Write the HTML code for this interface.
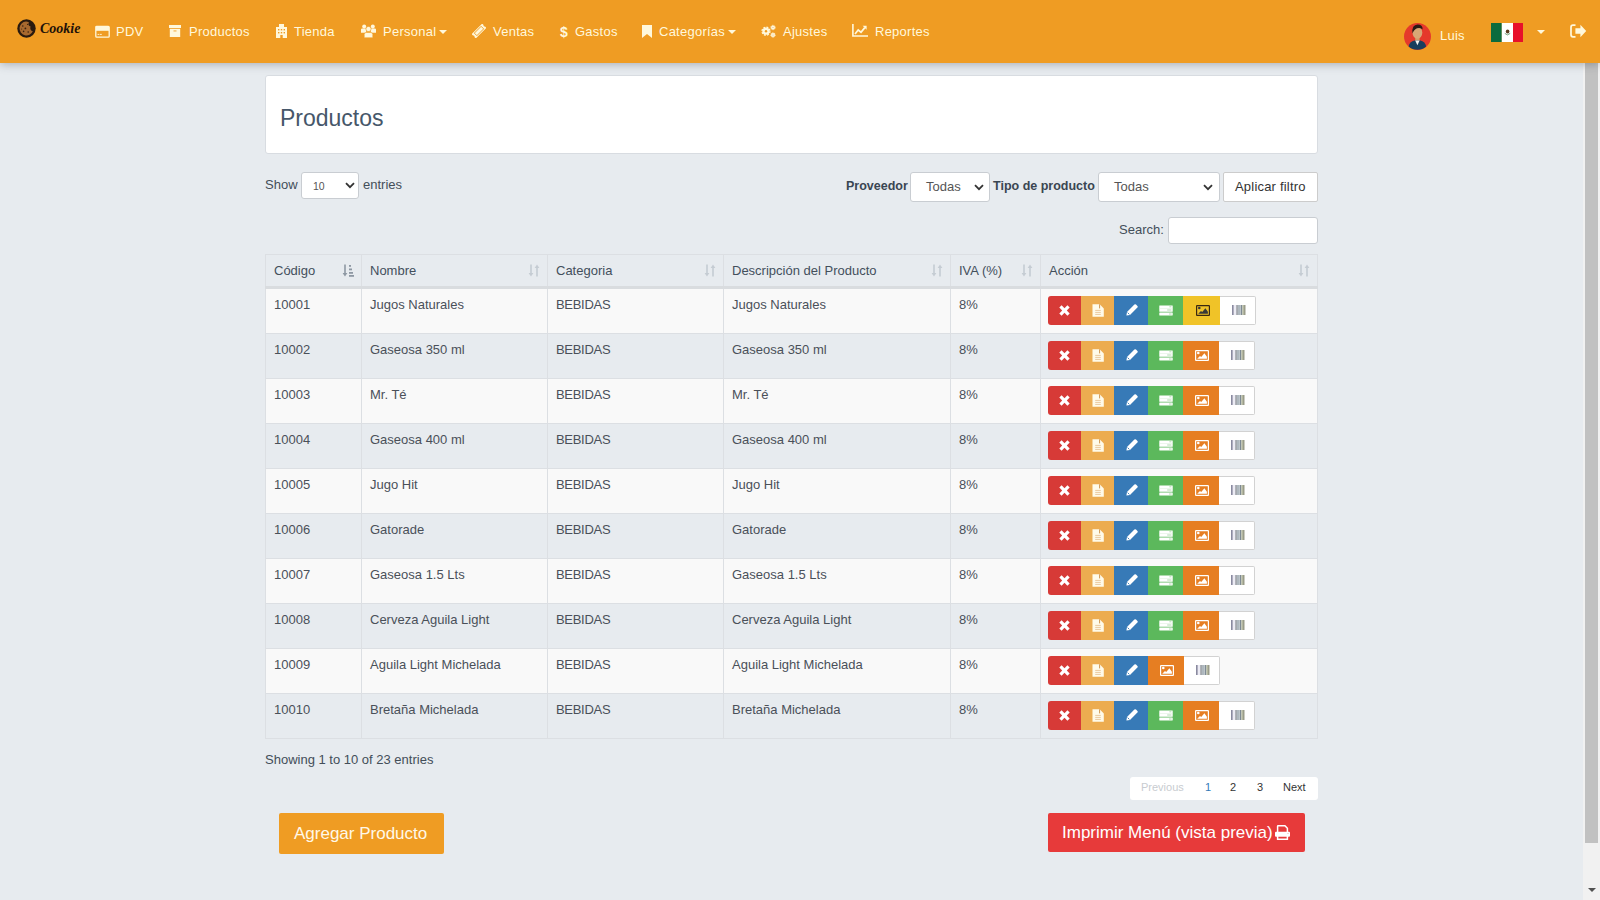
<!DOCTYPE html>
<html><head><meta charset="utf-8">
<style>
*{box-sizing:border-box;}
html,body{margin:0;padding:0;width:1600px;height:900px;overflow:hidden;}
body{background:#e7ebef;font-family:"Liberation Sans",sans-serif;color:#3d4853;font-size:13px;position:relative;}
.nav{position:absolute;left:0;top:0;width:1600px;height:63px;background:#ef9c23;z-index:10;box-shadow:0 1px 9px rgba(40,50,60,.35);}
.nav .t{position:absolute;top:24px;font-size:13px;line-height:16px;color:#fff8dc;white-space:nowrap;letter-spacing:.25px;}
.nav svg{position:absolute;}
.caret{position:absolute;width:0;height:0;border-left:4px solid transparent;border-right:4px solid transparent;border-top:4.5px solid #fff8dc;}
.sb{position:absolute;left:1583px;top:63px;width:17px;height:837px;background:#f1f1f1;z-index:5;}
.sb .th{position:absolute;left:2px;top:0;width:13px;height:780px;background:#c1c1c1;}
.sb .ar{position:absolute;left:4.5px;top:825px;width:0;height:0;border-left:4px solid transparent;border-right:4px solid transparent;border-top:4px solid #505050;}
.panel{position:absolute;left:265px;top:75px;width:1053px;height:79px;background:#fff;border:1px solid #d8dce1;border-radius:3px;}
.panel h1{position:absolute;left:14px;top:29px;margin:0;font-weight:normal;font-size:23px;line-height:26px;color:#46576a;}
.lbl{position:absolute;font-size:13px;line-height:16px;color:#434e59;white-space:nowrap;}
.sel{position:absolute;background:#fff;border:1px solid #c9cdd2;border-radius:3px;}
.sel .v{position:absolute;font-size:13px;line-height:16px;color:#4a4a4a;white-space:nowrap;}
.sel svg{position:absolute;}
.btnw{position:absolute;background:#fff;border:1px solid #ccc;border-radius:2px;}
table.dt{position:absolute;left:265px;top:254px;width:1052px;border-collapse:collapse;table-layout:fixed;}
table.dt th,table.dt td{border:1px solid #dcdfe3;padding:0 8px;text-align:left;vertical-align:top;white-space:nowrap;}
table.dt th{height:33px;font-weight:normal;font-size:13px;color:#434f5c;background:#e7ebef;border-bottom:3px solid #d9dcdf;position:relative;padding-top:8px;line-height:16px;}
table.dt td{height:45px;font-size:13px;line-height:16px;color:#4a5059;padding-top:8px;}
tbody tr:first-child td{height:46px;}
tr.odd td{background:#f9f9f9;}
tr.even td{background:#e7ebef;}
.si{position:absolute;right:7px;top:9px;}
.grp{display:flex;margin-top:-1px;margin-left:-1px;}
.b{display:flex;align-items:center;justify-content:center;height:29px;}
.br{background:#d73a37;width:33px;border-radius:3px 0 0 3px;}
.bo{background:#ecac50;width:33px;}
.bb{background:#377ab7;width:34px;}
.bg{background:#5cb85c;width:35px;}
.by{background:#f0c328;width:37px;}
.bd{background:#e67e22;width:36px;}
.bw{background:#fff;width:36px;border:1px solid #d2d2d2;border-left:none;border-radius:0 2px 2px 0;}
.info{position:absolute;left:265px;top:752px;font-size:13px;line-height:16px;color:#434e59;}
.pag{position:absolute;left:1130px;top:777px;width:188px;height:23px;background:#fff;border-radius:3px;}
.pag span{position:absolute;top:3px;font-size:11px;line-height:14px;color:#333;}
.add{position:absolute;left:279px;top:813px;width:165px;height:41px;background:#ef9c23;border-radius:2px;color:#fff8e8;font-size:17px;line-height:20px;}
.add span{position:absolute;left:15px;top:11px;}
.prn{position:absolute;left:1048px;top:813px;width:257px;height:39px;background:#e73a3a;border-radius:2px;color:#fff;font-size:17px;line-height:20px;white-space:nowrap;}
.prn span{position:absolute;left:14px;top:10px;}
</style></head>
<body>
<div class="nav">
  <!-- logo -->
  <svg style="left:17px;top:19px" width="19" height="19" viewBox="0 0 19 19"><circle cx="9.5" cy="9.5" r="9.2" fill="#2a1a0e"/><path d="M9 2.6A6.9 6.9 0 1 0 15.8 12.2 3.2 3.2 0 0 1 13.6 7.6 2.6 2.6 0 0 1 12 3.4 6.9 6.9 0 0 0 9 2.6z" fill="#a8692e"/><circle cx="5.8" cy="7" r=".8" fill="#3a2210"/><circle cx="8.4" cy="9.4" r=".9" fill="#3a2210"/><circle cx="6.6" cy="12.4" r=".8" fill="#3a2210"/><circle cx="11.2" cy="13" r=".8" fill="#3a2210"/><circle cx="10.6" cy="5.4" r=".6" fill="#3a2210"/><circle cx="4.6" cy="10" r=".5" fill="#3a2210"/></svg>
  <div class="t" style="left:40px;top:19px;font-family:'Liberation Serif',serif;font-style:italic;font-weight:bold;font-size:14px;color:#1f1209;letter-spacing:0;top:21px;">Cookie</div>
  <!-- PDV -->
  <svg style="left:95px;top:25px" width="15" height="13" viewBox="0 0 15 13"><rect x=".8" y="1.3" width="13.4" height="10.8" rx=".9" fill="none" stroke="#fff8dc" stroke-width="1.3"/><rect x="1" y="2" width="13" height="3.8" fill="#fff8dc"/><path d="M2.6 9.4h1.6M4.8 9.4h2" stroke="#fff8dc" stroke-width=".9"/></svg>
  <div class="t" style="left:116px">PDV</div>
  <!-- Productos -->
  <svg style="left:169px;top:25px" width="12" height="12" viewBox="0 0 12 12"><rect x="0" y="0" width="12" height="3" fill="#fff8dc"/><rect x=".8" y="3.8" width="10.4" height="8.2" fill="#fff8dc"/><rect x="4.5" y="5.5" width="3" height=".9" fill="#ef9c23"/></svg>
  <div class="t" style="left:189px">Productos</div>
  <!-- Tienda -->
  <svg style="left:276px;top:24px" width="11" height="14" viewBox="0 0 11 14"><path d="M0 3h11v11H0z" fill="#fff8dc"/><path d="M3 0h5v3H3z" fill="#fff8dc"/><rect x="2" y="5" width="1.4" height="1.4" fill="#ef9c23"/><rect x="4.8" y="5" width="1.4" height="1.4" fill="#ef9c23"/><rect x="7.6" y="5" width="1.4" height="1.4" fill="#ef9c23"/><rect x="2" y="8" width="1.4" height="1.4" fill="#ef9c23"/><rect x="4.8" y="8" width="1.4" height="1.4" fill="#ef9c23"/><rect x="7.6" y="8" width="1.4" height="1.4" fill="#ef9c23"/><rect x="4.3" y="11" width="2.4" height="3" fill="#ef9c23"/></svg>
  <div class="t" style="left:294px">Tienda</div>
  <!-- Personal -->
  <svg style="left:361px;top:24px" width="15" height="14" viewBox="0 0 15 14"><circle cx="3.2" cy="2.6" r="2" fill="#fff8dc"/><circle cx="11.8" cy="2.6" r="2" fill="#fff8dc"/><path d="M0 5.6q0-1.2 1.2-1.2h4v4.4H0zM9.8 4.4h4q1.2 0 1.2 1.2v3.2H9.8z" fill="#fff8dc"/><circle cx="7.5" cy="5" r="2.6" fill="#fff8dc" stroke="#ef9c23" stroke-width=".6"/><path d="M3.2 13.8V10.6q0-2.2 2.2-2.2h4.2q2.2 0 2.2 2.2v3.2z" fill="#fff8dc" stroke="#ef9c23" stroke-width=".6"/></svg>
  <div class="t" style="left:383px">Personal</div>
  <div class="caret" style="left:439px;top:30px"></div>
  <!-- Ventas -->
  <svg style="left:472px;top:24px" width="14" height="14" viewBox="0 0 14 14"><g transform="rotate(-45 7 7)"><path d="M-0.5 4h15v2a1.1 1.1 0 0 0 0 2v2h-15V8a1.1 1.1 0 0 0 0-2z" fill="#fff8dc"/><rect x="2.2" y="5.2" width="9.6" height="3.6" fill="none" stroke="#ef9c23" stroke-width=".9"/></g></svg>
  <div class="t" style="left:493px">Ventas</div>
  <!-- Gastos -->
  <div class="t" style="left:560px;font-weight:bold;font-size:14px;">$</div>
  <div class="t" style="left:575px">Gastos</div>
  <!-- Categorias -->
  <svg style="left:642px;top:25px" width="10" height="13" viewBox="0 0 10 13"><path d="M0 0h10v13L5 9 0 13Z" fill="#fff8dc"/></svg>
  <div class="t" style="left:659px">Categorías</div>
  <div class="caret" style="left:727.5px;top:30px"></div>
  <!-- Ajustes -->
  <svg style="left:761px;top:24px" width="15" height="14" viewBox="0 0 15 14"><circle cx="5" cy="7.2" r="4" fill="none" stroke="#fff8dc" stroke-width="1.3" stroke-dasharray="1.9 1.24"/><circle cx="5" cy="7.2" r="3.6" fill="#fff8dc"/><circle cx="5" cy="7.2" r="1.2" fill="#ef9c23"/><circle cx="12" cy="3.5" r="2.2" fill="none" stroke="#fff8dc" stroke-width=".9" stroke-dasharray="1.1 .63"/><circle cx="12" cy="3.5" r="2" fill="#fff8dc"/><circle cx="12" cy="3.5" r=".6" fill="#d9b080"/><circle cx="12" cy="11" r="2.2" fill="none" stroke="#fff8dc" stroke-width=".9" stroke-dasharray="1.1 .63"/><circle cx="12" cy="11" r="2" fill="#fff8dc"/><circle cx="12" cy="11" r=".6" fill="#d9b080"/></svg>
  <div class="t" style="left:783px">Ajustes</div>
  <!-- Reportes -->
  <svg style="left:852px;top:24px" width="16" height="13" viewBox="0 0 16 13"><path d="M.9 0V12H16" fill="none" stroke="#fff8dc" stroke-width="1.6"/><path d="M3 10 6.2 6 9 8.2 12.8 3.6" fill="none" stroke="#fff8dc" stroke-width="1.7"/><path d="M10.6 1.8H14.6V5.8Z" fill="#fff8dc"/></svg>
  <div class="t" style="left:875px">Reportes</div>
  <!-- right -->
  <svg style="left:1404px;top:23px" width="27" height="27" viewBox="0 0 27 27"><circle cx="13.5" cy="13.5" r="13.5" fill="#e5392b"/><path d="M11.2 13h4.4v5h-4.4z" fill="#cf9a68"/><path d="M4.6 23.6Q5.6 18.6 10.5 17.6h5.8q4.9 1 5.9 6A13.5 13.5 0 0 1 4.6 23.6z" fill="#173e5e"/><path d="M11.2 17.6h4.4L13.4 22.2z" fill="#f2f2f2"/><ellipse cx="13.4" cy="9.6" rx="4.9" ry="6.2" fill="#d8a775"/><path d="M8.4 10.4Q7.6 1.6 13.6 1.4 18.8 1.4 18.6 6.4 16.8 4.2 13 5.2 10.4 6 8.4 10.4z" fill="#2b1b15"/></svg>
  <div class="t" style="left:1440px;top:28px;font-size:13px;">Luis</div>
  <svg style="left:1491px;top:23px" width="32" height="19" viewBox="0 0 32 19"><rect width="10.8" height="19" fill="#0c6b3e"/><rect x="10.8" width="11.2" height="19" fill="#fff"/><rect x="22" width="10" height="19" fill="#e8102a"/><ellipse cx="16.6" cy="8.6" rx="1.8" ry="2" fill="#5a3a1e"/><path d="M13.8 10.4q2.6 3 5.4 0" stroke="#4a8a5a" stroke-width=".8" fill="none"/></svg>
  <div class="caret" style="left:1537px;top:30px"></div>
  <svg style="left:1570px;top:24px" width="17" height="14" viewBox="0 0 17 14"><path d="M5.5 1.2H3Q1 1.2 1 3.2v7.6q0 2 2 2h2.5" fill="none" stroke="#fff8dc" stroke-width="1.7"/><path d="M5.4 4.3h5V.8L16.2 7 10.4 13.2V9.7h-5z" fill="#fff8dc"/></svg>
</div>
<div class="sb"><div class="th"></div><div class="ar"></div></div>

<div class="panel"><h1>Productos</h1></div>

<div class="lbl" style="left:265px;top:177px">Show</div>
<div class="sel" style="left:301px;top:172px;width:58px;height:27px;">
  <div class="v" style="left:11px;top:5px;font-size:10.5px;color:#555;">10</div>
  <svg style="left:43px;top:9px" width="10" height="7" viewBox="0 0 10 7"><path d="M1 1.2 5 5.2 9 1.2" fill="none" stroke="#333" stroke-width="1.8"/></svg>
</div>
<div class="lbl" style="left:363px;top:177px">entries</div>

<div class="lbl" style="left:846px;top:178px;font-weight:bold;color:#3a4652;font-size:12.5px;">Proveedor</div>
<div class="sel" style="left:910px;top:172px;width:80px;height:30px;">
  <div class="v" style="left:15px;top:6px;color:#555;">Todas</div>
  <svg style="left:63px;top:11px" width="10" height="7" viewBox="0 0 10 7"><path d="M1 1.2 5 5.2 9 1.2" fill="none" stroke="#333" stroke-width="1.8"/></svg>
</div>
<div class="lbl" style="left:993px;top:178px;font-weight:bold;color:#3a4652;font-size:12.5px;">Tipo de producto</div>
<div class="sel" style="left:1098px;top:172px;width:122px;height:30px;">
  <div class="v" style="left:15px;top:6px;color:#555;">Todas</div>
  <svg style="left:104px;top:11px" width="10" height="7" viewBox="0 0 10 7"><path d="M1 1.2 5 5.2 9 1.2" fill="none" stroke="#333" stroke-width="1.8"/></svg>
</div>
<div class="btnw" style="left:1223px;top:172px;width:95px;height:30px;">
  <div class="v" style="position:absolute;left:11px;top:6px;font-size:13px;line-height:16px;color:#333;white-space:nowrap;letter-spacing:.2px;">Aplicar filtro</div>
</div>
<div class="lbl" style="left:1119px;top:222px">Search:</div>
<div class="sel" style="left:1168px;top:217px;width:150px;height:27px;"></div>

<table class="dt">
<colgroup><col style="width:96px"><col style="width:186px"><col style="width:176px"><col style="width:227px"><col style="width:90px"><col style="width:277px"></colgroup>
<thead><tr>
<th>Código<svg class="si" width="12" height="13" viewBox="0 0 12 13"><path d="M3 0.5V10" stroke="#8e98a3" stroke-width="1.6"/><path d="M0.6 9 3 12.5 5.4 9Z" fill="#8e98a3"/><rect x="7" y="1" width="2" height="1.8" fill="#8e98a3"/><rect x="7" y="4.5" width="3" height="1.8" fill="#8e98a3"/><rect x="7" y="8" width="4" height="1.8" fill="#8e98a3"/><rect x="7" y="11" width="5" height="1.8" fill="#8e98a3"/></svg></th><th>Nombre<svg class="si" width="12" height="13" viewBox="0 0 12 13"><path d="M3 0.5V10" stroke="#c5ccd3" stroke-width="1.6"/><path d="M0.6 9 3 12.5 5.4 9Z" fill="#c5ccd3"/><path d="M9 3V12.5" stroke="#c5ccd3" stroke-width="1.6"/><path d="M6.6 4 9 0.5 11.4 4Z" fill="#c5ccd3"/></svg></th><th>Categoria<svg class="si" width="12" height="13" viewBox="0 0 12 13"><path d="M3 0.5V10" stroke="#c5ccd3" stroke-width="1.6"/><path d="M0.6 9 3 12.5 5.4 9Z" fill="#c5ccd3"/><path d="M9 3V12.5" stroke="#c5ccd3" stroke-width="1.6"/><path d="M6.6 4 9 0.5 11.4 4Z" fill="#c5ccd3"/></svg></th><th>Descripción del Producto<svg class="si" width="12" height="13" viewBox="0 0 12 13"><path d="M3 0.5V10" stroke="#c5ccd3" stroke-width="1.6"/><path d="M0.6 9 3 12.5 5.4 9Z" fill="#c5ccd3"/><path d="M9 3V12.5" stroke="#c5ccd3" stroke-width="1.6"/><path d="M6.6 4 9 0.5 11.4 4Z" fill="#c5ccd3"/></svg></th><th>IVA (%)<svg class="si" width="12" height="13" viewBox="0 0 12 13"><path d="M3 0.5V10" stroke="#c5ccd3" stroke-width="1.6"/><path d="M0.6 9 3 12.5 5.4 9Z" fill="#c5ccd3"/><path d="M9 3V12.5" stroke="#c5ccd3" stroke-width="1.6"/><path d="M6.6 4 9 0.5 11.4 4Z" fill="#c5ccd3"/></svg></th><th>Acción<svg class="si" width="12" height="13" viewBox="0 0 12 13"><path d="M3 0.5V10" stroke="#c5ccd3" stroke-width="1.6"/><path d="M0.6 9 3 12.5 5.4 9Z" fill="#c5ccd3"/><path d="M9 3V12.5" stroke="#c5ccd3" stroke-width="1.6"/><path d="M6.6 4 9 0.5 11.4 4Z" fill="#c5ccd3"/></svg></th>
</tr></thead>
<tbody>
<tr class="odd"><td>10001</td><td>Jugos Naturales</td><td style="letter-spacing:-.3px">BEBIDAS</td><td>Jugos Naturales</td><td>8%</td><td><div class="grp"><span class="b br"><svg width="11" height="11" viewBox="0 0 11 11"><path d="M0.3 2.6 2.6 0.3 5.5 3.2 8.4 0.3 10.7 2.6 7.8 5.5 10.7 8.4 8.4 10.7 5.5 7.8 2.6 10.7 0.3 8.4 3.2 5.5Z" fill="#fff"/></svg></span><span class="b bo"><svg width="12" height="13" viewBox="0 0 12 13"><path d="M0.5 0.3h7.2L11.8 4.4V12.7H0.5Z" fill="#fffbea"/><path d="M7.6 0.3V4.4" stroke="#c98a40" stroke-width=".9"/><path d="M3.2 6.4h5.6M3.2 8.4h5.6M3.2 10.4h5.6" stroke="#d9a060" stroke-width=".55"/></svg></span><span class="b bb"><svg width="12" height="12" viewBox="0 0 12 12" style="margin:-1px 0 0 1px"><path d="M8.4 0.6Q9.2-.2 10 .6L11.4 2Q12.2 2.8 11.4 3.6L4 11 0.4 11.6 1 8Z" fill="#fff"/><path d="M1.6 8.6 3.4 10.4" stroke="#377ab7" stroke-width=".9"/></svg></span><span class="b bg"><svg width="14" height="11" viewBox="0 0 14 11" style="margin-top:-1px"><rect x="0.3" y="0.4" width="13.4" height="6.4" rx=".3" fill="#fff"/><path d="M0.3 3.5h13.4" stroke="#d8efd8" stroke-width=".5"/><rect x="0.3" y="7.6" width="13.4" height="2.8" rx=".3" fill="#fff"/><path d="M10.4 1.8h2M8.2 5h4.2M10 9h2.6" stroke="#7fbf7f" stroke-width=".6"/></svg></span><span class="b by"><svg width="14" height="11" viewBox="0 0 14 11" style="margin-left:2px"><rect x="0.6" y="0.6" width="12.8" height="9.8" rx=".5" fill="none" stroke="#3a2810" stroke-width="1.2"/><circle cx="3.3" cy="3" r="1.3" fill="#383838"/><path d="M2.2 8.8 5 6 6.2 7 9.4 3.2 11.9 6.8V8.8Z" fill="#383838"/></svg></span><span class="b bw"><svg width="14" height="10" viewBox="0 0 14 10" style="margin:-1px 0 0 2px"><rect x="0" y="0" width="1.8" height="10" fill="#8a8aa0"/><rect x="1.8" y="0" width="2.4" height="10" fill="#ecebf4"/><rect x="4.4" y="0" width="1.3" height="10" fill="#7e848c"/><rect x="6" y="0" width="2.6" height="10" fill="#aeb8be"/><rect x="8.8" y="0" width="1.5" height="10" fill="#7e8a94"/><rect x="10.4" y="0" width="1.6" height="10" fill="#b4b8a0"/><rect x="12" y="0" width="1.5" height="10" fill="#9a9c8a"/></svg></span></div></td></tr>
<tr class="even"><td>10002</td><td>Gaseosa 350 ml</td><td style="letter-spacing:-.3px">BEBIDAS</td><td>Gaseosa 350 ml</td><td>8%</td><td><div class="grp"><span class="b br"><svg width="11" height="11" viewBox="0 0 11 11"><path d="M0.3 2.6 2.6 0.3 5.5 3.2 8.4 0.3 10.7 2.6 7.8 5.5 10.7 8.4 8.4 10.7 5.5 7.8 2.6 10.7 0.3 8.4 3.2 5.5Z" fill="#fff"/></svg></span><span class="b bo"><svg width="12" height="13" viewBox="0 0 12 13"><path d="M0.5 0.3h7.2L11.8 4.4V12.7H0.5Z" fill="#fffbea"/><path d="M7.6 0.3V4.4" stroke="#c98a40" stroke-width=".9"/><path d="M3.2 6.4h5.6M3.2 8.4h5.6M3.2 10.4h5.6" stroke="#d9a060" stroke-width=".55"/></svg></span><span class="b bb"><svg width="12" height="12" viewBox="0 0 12 12" style="margin:-1px 0 0 1px"><path d="M8.4 0.6Q9.2-.2 10 .6L11.4 2Q12.2 2.8 11.4 3.6L4 11 0.4 11.6 1 8Z" fill="#fff"/><path d="M1.6 8.6 3.4 10.4" stroke="#377ab7" stroke-width=".9"/></svg></span><span class="b bg"><svg width="14" height="11" viewBox="0 0 14 11" style="margin-top:-1px"><rect x="0.3" y="0.4" width="13.4" height="6.4" rx=".3" fill="#fff"/><path d="M0.3 3.5h13.4" stroke="#d8efd8" stroke-width=".5"/><rect x="0.3" y="7.6" width="13.4" height="2.8" rx=".3" fill="#fff"/><path d="M10.4 1.8h2M8.2 5h4.2M10 9h2.6" stroke="#7fbf7f" stroke-width=".6"/></svg></span><span class="b bd"><svg width="14" height="11" viewBox="0 0 14 11" style="margin-left:2px"><rect x="0.6" y="0.6" width="12.8" height="9.8" rx=".5" fill="none" stroke="#fff" stroke-width="1.2"/><circle cx="3.3" cy="3" r="1.3" fill="#fff"/><path d="M2.2 8.8 5 6 6.2 7 9.4 3.2 11.9 6.8V8.8Z" fill="#fff"/></svg></span><span class="b bw"><svg width="14" height="10" viewBox="0 0 14 10" style="margin:-1px 0 0 2px"><rect x="0" y="0" width="1.8" height="10" fill="#8a8aa0"/><rect x="1.8" y="0" width="2.4" height="10" fill="#ecebf4"/><rect x="4.4" y="0" width="1.3" height="10" fill="#7e848c"/><rect x="6" y="0" width="2.6" height="10" fill="#aeb8be"/><rect x="8.8" y="0" width="1.5" height="10" fill="#7e8a94"/><rect x="10.4" y="0" width="1.6" height="10" fill="#b4b8a0"/><rect x="12" y="0" width="1.5" height="10" fill="#9a9c8a"/></svg></span></div></td></tr>
<tr class="odd"><td>10003</td><td>Mr. Té</td><td style="letter-spacing:-.3px">BEBIDAS</td><td>Mr. Té</td><td>8%</td><td><div class="grp"><span class="b br"><svg width="11" height="11" viewBox="0 0 11 11"><path d="M0.3 2.6 2.6 0.3 5.5 3.2 8.4 0.3 10.7 2.6 7.8 5.5 10.7 8.4 8.4 10.7 5.5 7.8 2.6 10.7 0.3 8.4 3.2 5.5Z" fill="#fff"/></svg></span><span class="b bo"><svg width="12" height="13" viewBox="0 0 12 13"><path d="M0.5 0.3h7.2L11.8 4.4V12.7H0.5Z" fill="#fffbea"/><path d="M7.6 0.3V4.4" stroke="#c98a40" stroke-width=".9"/><path d="M3.2 6.4h5.6M3.2 8.4h5.6M3.2 10.4h5.6" stroke="#d9a060" stroke-width=".55"/></svg></span><span class="b bb"><svg width="12" height="12" viewBox="0 0 12 12" style="margin:-1px 0 0 1px"><path d="M8.4 0.6Q9.2-.2 10 .6L11.4 2Q12.2 2.8 11.4 3.6L4 11 0.4 11.6 1 8Z" fill="#fff"/><path d="M1.6 8.6 3.4 10.4" stroke="#377ab7" stroke-width=".9"/></svg></span><span class="b bg"><svg width="14" height="11" viewBox="0 0 14 11" style="margin-top:-1px"><rect x="0.3" y="0.4" width="13.4" height="6.4" rx=".3" fill="#fff"/><path d="M0.3 3.5h13.4" stroke="#d8efd8" stroke-width=".5"/><rect x="0.3" y="7.6" width="13.4" height="2.8" rx=".3" fill="#fff"/><path d="M10.4 1.8h2M8.2 5h4.2M10 9h2.6" stroke="#7fbf7f" stroke-width=".6"/></svg></span><span class="b bd"><svg width="14" height="11" viewBox="0 0 14 11" style="margin-left:2px"><rect x="0.6" y="0.6" width="12.8" height="9.8" rx=".5" fill="none" stroke="#fff" stroke-width="1.2"/><circle cx="3.3" cy="3" r="1.3" fill="#fff"/><path d="M2.2 8.8 5 6 6.2 7 9.4 3.2 11.9 6.8V8.8Z" fill="#fff"/></svg></span><span class="b bw"><svg width="14" height="10" viewBox="0 0 14 10" style="margin:-1px 0 0 2px"><rect x="0" y="0" width="1.8" height="10" fill="#8a8aa0"/><rect x="1.8" y="0" width="2.4" height="10" fill="#ecebf4"/><rect x="4.4" y="0" width="1.3" height="10" fill="#7e848c"/><rect x="6" y="0" width="2.6" height="10" fill="#aeb8be"/><rect x="8.8" y="0" width="1.5" height="10" fill="#7e8a94"/><rect x="10.4" y="0" width="1.6" height="10" fill="#b4b8a0"/><rect x="12" y="0" width="1.5" height="10" fill="#9a9c8a"/></svg></span></div></td></tr>
<tr class="even"><td>10004</td><td>Gaseosa 400 ml</td><td style="letter-spacing:-.3px">BEBIDAS</td><td>Gaseosa 400 ml</td><td>8%</td><td><div class="grp"><span class="b br"><svg width="11" height="11" viewBox="0 0 11 11"><path d="M0.3 2.6 2.6 0.3 5.5 3.2 8.4 0.3 10.7 2.6 7.8 5.5 10.7 8.4 8.4 10.7 5.5 7.8 2.6 10.7 0.3 8.4 3.2 5.5Z" fill="#fff"/></svg></span><span class="b bo"><svg width="12" height="13" viewBox="0 0 12 13"><path d="M0.5 0.3h7.2L11.8 4.4V12.7H0.5Z" fill="#fffbea"/><path d="M7.6 0.3V4.4" stroke="#c98a40" stroke-width=".9"/><path d="M3.2 6.4h5.6M3.2 8.4h5.6M3.2 10.4h5.6" stroke="#d9a060" stroke-width=".55"/></svg></span><span class="b bb"><svg width="12" height="12" viewBox="0 0 12 12" style="margin:-1px 0 0 1px"><path d="M8.4 0.6Q9.2-.2 10 .6L11.4 2Q12.2 2.8 11.4 3.6L4 11 0.4 11.6 1 8Z" fill="#fff"/><path d="M1.6 8.6 3.4 10.4" stroke="#377ab7" stroke-width=".9"/></svg></span><span class="b bg"><svg width="14" height="11" viewBox="0 0 14 11" style="margin-top:-1px"><rect x="0.3" y="0.4" width="13.4" height="6.4" rx=".3" fill="#fff"/><path d="M0.3 3.5h13.4" stroke="#d8efd8" stroke-width=".5"/><rect x="0.3" y="7.6" width="13.4" height="2.8" rx=".3" fill="#fff"/><path d="M10.4 1.8h2M8.2 5h4.2M10 9h2.6" stroke="#7fbf7f" stroke-width=".6"/></svg></span><span class="b bd"><svg width="14" height="11" viewBox="0 0 14 11" style="margin-left:2px"><rect x="0.6" y="0.6" width="12.8" height="9.8" rx=".5" fill="none" stroke="#fff" stroke-width="1.2"/><circle cx="3.3" cy="3" r="1.3" fill="#fff"/><path d="M2.2 8.8 5 6 6.2 7 9.4 3.2 11.9 6.8V8.8Z" fill="#fff"/></svg></span><span class="b bw"><svg width="14" height="10" viewBox="0 0 14 10" style="margin:-1px 0 0 2px"><rect x="0" y="0" width="1.8" height="10" fill="#8a8aa0"/><rect x="1.8" y="0" width="2.4" height="10" fill="#ecebf4"/><rect x="4.4" y="0" width="1.3" height="10" fill="#7e848c"/><rect x="6" y="0" width="2.6" height="10" fill="#aeb8be"/><rect x="8.8" y="0" width="1.5" height="10" fill="#7e8a94"/><rect x="10.4" y="0" width="1.6" height="10" fill="#b4b8a0"/><rect x="12" y="0" width="1.5" height="10" fill="#9a9c8a"/></svg></span></div></td></tr>
<tr class="odd"><td>10005</td><td>Jugo Hit</td><td style="letter-spacing:-.3px">BEBIDAS</td><td>Jugo Hit</td><td>8%</td><td><div class="grp"><span class="b br"><svg width="11" height="11" viewBox="0 0 11 11"><path d="M0.3 2.6 2.6 0.3 5.5 3.2 8.4 0.3 10.7 2.6 7.8 5.5 10.7 8.4 8.4 10.7 5.5 7.8 2.6 10.7 0.3 8.4 3.2 5.5Z" fill="#fff"/></svg></span><span class="b bo"><svg width="12" height="13" viewBox="0 0 12 13"><path d="M0.5 0.3h7.2L11.8 4.4V12.7H0.5Z" fill="#fffbea"/><path d="M7.6 0.3V4.4" stroke="#c98a40" stroke-width=".9"/><path d="M3.2 6.4h5.6M3.2 8.4h5.6M3.2 10.4h5.6" stroke="#d9a060" stroke-width=".55"/></svg></span><span class="b bb"><svg width="12" height="12" viewBox="0 0 12 12" style="margin:-1px 0 0 1px"><path d="M8.4 0.6Q9.2-.2 10 .6L11.4 2Q12.2 2.8 11.4 3.6L4 11 0.4 11.6 1 8Z" fill="#fff"/><path d="M1.6 8.6 3.4 10.4" stroke="#377ab7" stroke-width=".9"/></svg></span><span class="b bg"><svg width="14" height="11" viewBox="0 0 14 11" style="margin-top:-1px"><rect x="0.3" y="0.4" width="13.4" height="6.4" rx=".3" fill="#fff"/><path d="M0.3 3.5h13.4" stroke="#d8efd8" stroke-width=".5"/><rect x="0.3" y="7.6" width="13.4" height="2.8" rx=".3" fill="#fff"/><path d="M10.4 1.8h2M8.2 5h4.2M10 9h2.6" stroke="#7fbf7f" stroke-width=".6"/></svg></span><span class="b bd"><svg width="14" height="11" viewBox="0 0 14 11" style="margin-left:2px"><rect x="0.6" y="0.6" width="12.8" height="9.8" rx=".5" fill="none" stroke="#fff" stroke-width="1.2"/><circle cx="3.3" cy="3" r="1.3" fill="#fff"/><path d="M2.2 8.8 5 6 6.2 7 9.4 3.2 11.9 6.8V8.8Z" fill="#fff"/></svg></span><span class="b bw"><svg width="14" height="10" viewBox="0 0 14 10" style="margin:-1px 0 0 2px"><rect x="0" y="0" width="1.8" height="10" fill="#8a8aa0"/><rect x="1.8" y="0" width="2.4" height="10" fill="#ecebf4"/><rect x="4.4" y="0" width="1.3" height="10" fill="#7e848c"/><rect x="6" y="0" width="2.6" height="10" fill="#aeb8be"/><rect x="8.8" y="0" width="1.5" height="10" fill="#7e8a94"/><rect x="10.4" y="0" width="1.6" height="10" fill="#b4b8a0"/><rect x="12" y="0" width="1.5" height="10" fill="#9a9c8a"/></svg></span></div></td></tr>
<tr class="even"><td>10006</td><td>Gatorade</td><td style="letter-spacing:-.3px">BEBIDAS</td><td>Gatorade</td><td>8%</td><td><div class="grp"><span class="b br"><svg width="11" height="11" viewBox="0 0 11 11"><path d="M0.3 2.6 2.6 0.3 5.5 3.2 8.4 0.3 10.7 2.6 7.8 5.5 10.7 8.4 8.4 10.7 5.5 7.8 2.6 10.7 0.3 8.4 3.2 5.5Z" fill="#fff"/></svg></span><span class="b bo"><svg width="12" height="13" viewBox="0 0 12 13"><path d="M0.5 0.3h7.2L11.8 4.4V12.7H0.5Z" fill="#fffbea"/><path d="M7.6 0.3V4.4" stroke="#c98a40" stroke-width=".9"/><path d="M3.2 6.4h5.6M3.2 8.4h5.6M3.2 10.4h5.6" stroke="#d9a060" stroke-width=".55"/></svg></span><span class="b bb"><svg width="12" height="12" viewBox="0 0 12 12" style="margin:-1px 0 0 1px"><path d="M8.4 0.6Q9.2-.2 10 .6L11.4 2Q12.2 2.8 11.4 3.6L4 11 0.4 11.6 1 8Z" fill="#fff"/><path d="M1.6 8.6 3.4 10.4" stroke="#377ab7" stroke-width=".9"/></svg></span><span class="b bg"><svg width="14" height="11" viewBox="0 0 14 11" style="margin-top:-1px"><rect x="0.3" y="0.4" width="13.4" height="6.4" rx=".3" fill="#fff"/><path d="M0.3 3.5h13.4" stroke="#d8efd8" stroke-width=".5"/><rect x="0.3" y="7.6" width="13.4" height="2.8" rx=".3" fill="#fff"/><path d="M10.4 1.8h2M8.2 5h4.2M10 9h2.6" stroke="#7fbf7f" stroke-width=".6"/></svg></span><span class="b bd"><svg width="14" height="11" viewBox="0 0 14 11" style="margin-left:2px"><rect x="0.6" y="0.6" width="12.8" height="9.8" rx=".5" fill="none" stroke="#fff" stroke-width="1.2"/><circle cx="3.3" cy="3" r="1.3" fill="#fff"/><path d="M2.2 8.8 5 6 6.2 7 9.4 3.2 11.9 6.8V8.8Z" fill="#fff"/></svg></span><span class="b bw"><svg width="14" height="10" viewBox="0 0 14 10" style="margin:-1px 0 0 2px"><rect x="0" y="0" width="1.8" height="10" fill="#8a8aa0"/><rect x="1.8" y="0" width="2.4" height="10" fill="#ecebf4"/><rect x="4.4" y="0" width="1.3" height="10" fill="#7e848c"/><rect x="6" y="0" width="2.6" height="10" fill="#aeb8be"/><rect x="8.8" y="0" width="1.5" height="10" fill="#7e8a94"/><rect x="10.4" y="0" width="1.6" height="10" fill="#b4b8a0"/><rect x="12" y="0" width="1.5" height="10" fill="#9a9c8a"/></svg></span></div></td></tr>
<tr class="odd"><td>10007</td><td>Gaseosa 1.5 Lts</td><td style="letter-spacing:-.3px">BEBIDAS</td><td>Gaseosa 1.5 Lts</td><td>8%</td><td><div class="grp"><span class="b br"><svg width="11" height="11" viewBox="0 0 11 11"><path d="M0.3 2.6 2.6 0.3 5.5 3.2 8.4 0.3 10.7 2.6 7.8 5.5 10.7 8.4 8.4 10.7 5.5 7.8 2.6 10.7 0.3 8.4 3.2 5.5Z" fill="#fff"/></svg></span><span class="b bo"><svg width="12" height="13" viewBox="0 0 12 13"><path d="M0.5 0.3h7.2L11.8 4.4V12.7H0.5Z" fill="#fffbea"/><path d="M7.6 0.3V4.4" stroke="#c98a40" stroke-width=".9"/><path d="M3.2 6.4h5.6M3.2 8.4h5.6M3.2 10.4h5.6" stroke="#d9a060" stroke-width=".55"/></svg></span><span class="b bb"><svg width="12" height="12" viewBox="0 0 12 12" style="margin:-1px 0 0 1px"><path d="M8.4 0.6Q9.2-.2 10 .6L11.4 2Q12.2 2.8 11.4 3.6L4 11 0.4 11.6 1 8Z" fill="#fff"/><path d="M1.6 8.6 3.4 10.4" stroke="#377ab7" stroke-width=".9"/></svg></span><span class="b bg"><svg width="14" height="11" viewBox="0 0 14 11" style="margin-top:-1px"><rect x="0.3" y="0.4" width="13.4" height="6.4" rx=".3" fill="#fff"/><path d="M0.3 3.5h13.4" stroke="#d8efd8" stroke-width=".5"/><rect x="0.3" y="7.6" width="13.4" height="2.8" rx=".3" fill="#fff"/><path d="M10.4 1.8h2M8.2 5h4.2M10 9h2.6" stroke="#7fbf7f" stroke-width=".6"/></svg></span><span class="b bd"><svg width="14" height="11" viewBox="0 0 14 11" style="margin-left:2px"><rect x="0.6" y="0.6" width="12.8" height="9.8" rx=".5" fill="none" stroke="#fff" stroke-width="1.2"/><circle cx="3.3" cy="3" r="1.3" fill="#fff"/><path d="M2.2 8.8 5 6 6.2 7 9.4 3.2 11.9 6.8V8.8Z" fill="#fff"/></svg></span><span class="b bw"><svg width="14" height="10" viewBox="0 0 14 10" style="margin:-1px 0 0 2px"><rect x="0" y="0" width="1.8" height="10" fill="#8a8aa0"/><rect x="1.8" y="0" width="2.4" height="10" fill="#ecebf4"/><rect x="4.4" y="0" width="1.3" height="10" fill="#7e848c"/><rect x="6" y="0" width="2.6" height="10" fill="#aeb8be"/><rect x="8.8" y="0" width="1.5" height="10" fill="#7e8a94"/><rect x="10.4" y="0" width="1.6" height="10" fill="#b4b8a0"/><rect x="12" y="0" width="1.5" height="10" fill="#9a9c8a"/></svg></span></div></td></tr>
<tr class="even"><td>10008</td><td>Cerveza Aguila Light</td><td style="letter-spacing:-.3px">BEBIDAS</td><td>Cerveza Aguila Light</td><td>8%</td><td><div class="grp"><span class="b br"><svg width="11" height="11" viewBox="0 0 11 11"><path d="M0.3 2.6 2.6 0.3 5.5 3.2 8.4 0.3 10.7 2.6 7.8 5.5 10.7 8.4 8.4 10.7 5.5 7.8 2.6 10.7 0.3 8.4 3.2 5.5Z" fill="#fff"/></svg></span><span class="b bo"><svg width="12" height="13" viewBox="0 0 12 13"><path d="M0.5 0.3h7.2L11.8 4.4V12.7H0.5Z" fill="#fffbea"/><path d="M7.6 0.3V4.4" stroke="#c98a40" stroke-width=".9"/><path d="M3.2 6.4h5.6M3.2 8.4h5.6M3.2 10.4h5.6" stroke="#d9a060" stroke-width=".55"/></svg></span><span class="b bb"><svg width="12" height="12" viewBox="0 0 12 12" style="margin:-1px 0 0 1px"><path d="M8.4 0.6Q9.2-.2 10 .6L11.4 2Q12.2 2.8 11.4 3.6L4 11 0.4 11.6 1 8Z" fill="#fff"/><path d="M1.6 8.6 3.4 10.4" stroke="#377ab7" stroke-width=".9"/></svg></span><span class="b bg"><svg width="14" height="11" viewBox="0 0 14 11" style="margin-top:-1px"><rect x="0.3" y="0.4" width="13.4" height="6.4" rx=".3" fill="#fff"/><path d="M0.3 3.5h13.4" stroke="#d8efd8" stroke-width=".5"/><rect x="0.3" y="7.6" width="13.4" height="2.8" rx=".3" fill="#fff"/><path d="M10.4 1.8h2M8.2 5h4.2M10 9h2.6" stroke="#7fbf7f" stroke-width=".6"/></svg></span><span class="b bd"><svg width="14" height="11" viewBox="0 0 14 11" style="margin-left:2px"><rect x="0.6" y="0.6" width="12.8" height="9.8" rx=".5" fill="none" stroke="#fff" stroke-width="1.2"/><circle cx="3.3" cy="3" r="1.3" fill="#fff"/><path d="M2.2 8.8 5 6 6.2 7 9.4 3.2 11.9 6.8V8.8Z" fill="#fff"/></svg></span><span class="b bw"><svg width="14" height="10" viewBox="0 0 14 10" style="margin:-1px 0 0 2px"><rect x="0" y="0" width="1.8" height="10" fill="#8a8aa0"/><rect x="1.8" y="0" width="2.4" height="10" fill="#ecebf4"/><rect x="4.4" y="0" width="1.3" height="10" fill="#7e848c"/><rect x="6" y="0" width="2.6" height="10" fill="#aeb8be"/><rect x="8.8" y="0" width="1.5" height="10" fill="#7e8a94"/><rect x="10.4" y="0" width="1.6" height="10" fill="#b4b8a0"/><rect x="12" y="0" width="1.5" height="10" fill="#9a9c8a"/></svg></span></div></td></tr>
<tr class="odd"><td>10009</td><td>Aguila Light Michelada</td><td style="letter-spacing:-.3px">BEBIDAS</td><td>Aguila Light Michelada</td><td>8%</td><td><div class="grp"><span class="b br"><svg width="11" height="11" viewBox="0 0 11 11"><path d="M0.3 2.6 2.6 0.3 5.5 3.2 8.4 0.3 10.7 2.6 7.8 5.5 10.7 8.4 8.4 10.7 5.5 7.8 2.6 10.7 0.3 8.4 3.2 5.5Z" fill="#fff"/></svg></span><span class="b bo"><svg width="12" height="13" viewBox="0 0 12 13"><path d="M0.5 0.3h7.2L11.8 4.4V12.7H0.5Z" fill="#fffbea"/><path d="M7.6 0.3V4.4" stroke="#c98a40" stroke-width=".9"/><path d="M3.2 6.4h5.6M3.2 8.4h5.6M3.2 10.4h5.6" stroke="#d9a060" stroke-width=".55"/></svg></span><span class="b bb"><svg width="12" height="12" viewBox="0 0 12 12" style="margin:-1px 0 0 1px"><path d="M8.4 0.6Q9.2-.2 10 .6L11.4 2Q12.2 2.8 11.4 3.6L4 11 0.4 11.6 1 8Z" fill="#fff"/><path d="M1.6 8.6 3.4 10.4" stroke="#377ab7" stroke-width=".9"/></svg></span><span class="b bd"><svg width="14" height="11" viewBox="0 0 14 11" style="margin-left:2px"><rect x="0.6" y="0.6" width="12.8" height="9.8" rx=".5" fill="none" stroke="#fff" stroke-width="1.2"/><circle cx="3.3" cy="3" r="1.3" fill="#fff"/><path d="M2.2 8.8 5 6 6.2 7 9.4 3.2 11.9 6.8V8.8Z" fill="#fff"/></svg></span><span class="b bw"><svg width="14" height="10" viewBox="0 0 14 10" style="margin:-1px 0 0 2px"><rect x="0" y="0" width="1.8" height="10" fill="#8a8aa0"/><rect x="1.8" y="0" width="2.4" height="10" fill="#ecebf4"/><rect x="4.4" y="0" width="1.3" height="10" fill="#7e848c"/><rect x="6" y="0" width="2.6" height="10" fill="#aeb8be"/><rect x="8.8" y="0" width="1.5" height="10" fill="#7e8a94"/><rect x="10.4" y="0" width="1.6" height="10" fill="#b4b8a0"/><rect x="12" y="0" width="1.5" height="10" fill="#9a9c8a"/></svg></span></div></td></tr>
<tr class="even"><td>10010</td><td>Bretaña Michelada</td><td style="letter-spacing:-.3px">BEBIDAS</td><td>Bretaña Michelada</td><td>8%</td><td><div class="grp"><span class="b br"><svg width="11" height="11" viewBox="0 0 11 11"><path d="M0.3 2.6 2.6 0.3 5.5 3.2 8.4 0.3 10.7 2.6 7.8 5.5 10.7 8.4 8.4 10.7 5.5 7.8 2.6 10.7 0.3 8.4 3.2 5.5Z" fill="#fff"/></svg></span><span class="b bo"><svg width="12" height="13" viewBox="0 0 12 13"><path d="M0.5 0.3h7.2L11.8 4.4V12.7H0.5Z" fill="#fffbea"/><path d="M7.6 0.3V4.4" stroke="#c98a40" stroke-width=".9"/><path d="M3.2 6.4h5.6M3.2 8.4h5.6M3.2 10.4h5.6" stroke="#d9a060" stroke-width=".55"/></svg></span><span class="b bb"><svg width="12" height="12" viewBox="0 0 12 12" style="margin:-1px 0 0 1px"><path d="M8.4 0.6Q9.2-.2 10 .6L11.4 2Q12.2 2.8 11.4 3.6L4 11 0.4 11.6 1 8Z" fill="#fff"/><path d="M1.6 8.6 3.4 10.4" stroke="#377ab7" stroke-width=".9"/></svg></span><span class="b bg"><svg width="14" height="11" viewBox="0 0 14 11" style="margin-top:-1px"><rect x="0.3" y="0.4" width="13.4" height="6.4" rx=".3" fill="#fff"/><path d="M0.3 3.5h13.4" stroke="#d8efd8" stroke-width=".5"/><rect x="0.3" y="7.6" width="13.4" height="2.8" rx=".3" fill="#fff"/><path d="M10.4 1.8h2M8.2 5h4.2M10 9h2.6" stroke="#7fbf7f" stroke-width=".6"/></svg></span><span class="b bd"><svg width="14" height="11" viewBox="0 0 14 11" style="margin-left:2px"><rect x="0.6" y="0.6" width="12.8" height="9.8" rx=".5" fill="none" stroke="#fff" stroke-width="1.2"/><circle cx="3.3" cy="3" r="1.3" fill="#fff"/><path d="M2.2 8.8 5 6 6.2 7 9.4 3.2 11.9 6.8V8.8Z" fill="#fff"/></svg></span><span class="b bw"><svg width="14" height="10" viewBox="0 0 14 10" style="margin:-1px 0 0 2px"><rect x="0" y="0" width="1.8" height="10" fill="#8a8aa0"/><rect x="1.8" y="0" width="2.4" height="10" fill="#ecebf4"/><rect x="4.4" y="0" width="1.3" height="10" fill="#7e848c"/><rect x="6" y="0" width="2.6" height="10" fill="#aeb8be"/><rect x="8.8" y="0" width="1.5" height="10" fill="#7e8a94"/><rect x="10.4" y="0" width="1.6" height="10" fill="#b4b8a0"/><rect x="12" y="0" width="1.5" height="10" fill="#9a9c8a"/></svg></span></div></td></tr>
</tbody>
</table>

<div class="info">Showing 1 to 10 of 23 entries</div>
<div class="pag"><span style="left:11px;color:#c8ccd0">Previous</span><span style="left:75px;color:#337ab7">1</span><span style="left:100px">2</span><span style="left:127px">3</span><span style="left:153px">Next</span></div>

<div class="add"><span>Agregar Producto</span></div>
<div class="prn"><span>Imprimir Menú (vista previa)<svg width="15" height="15" viewBox="0 0 15 15" style="vertical-align:-2px;margin-left:2px"><path d="M2.6 7.5V1.3Q2.6.7 3.2.7H9.9L12.4 3.2V7.5" fill="none" stroke="#fff" stroke-width="1.5"/><rect x="0" y="6.8" width="15" height="5" rx="1" fill="#fff"/><path d="M2.6 11v3.2h9.8V11" fill="none" stroke="#fff" stroke-width="1.5"/><circle cx="13" cy="8.4" r=".45" fill="#e73a3a"/></svg></span></div>
</body></html>
